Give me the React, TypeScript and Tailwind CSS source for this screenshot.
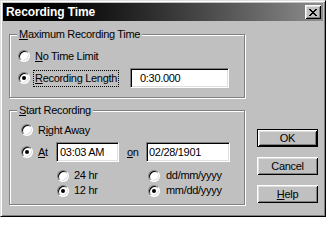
import React from 'react';

const raised =
  'shadow-[inset_1px_1px_0_#fff,inset_-1px_-1px_0_#000,inset_2px_2px_0_#dfdfdf,inset_-2px_-2px_0_#808080]';
const sunken =
  'bg-white border border-t-[#808080] border-l-[#808080] border-b-white border-r-white shadow-[inset_1px_1px_0_#000,inset_-1px_-1px_0_#dfdfdf]';

const Radio = ({ checked }: { checked?: boolean }) => (
  <span className={`relative block w-[12px] h-[12px] shrink-0 rounded-full ${sunken}`}>
    {checked && <span className="absolute left-[3px] top-[3px] w-[4px] h-[4px] rounded-full bg-black" />}
  </span>
);

const Group: React.FC<{ label: React.ReactNode; className: string; children: React.ReactNode }> = ({
  label,
  className,
  children,
}) => (
  <div className={`relative border border-[#808080] shadow-[inset_1px_1px_0_#fff,1px_1px_0_#fff] ${className}`}>
    <span className="absolute left-[7px] top-[-8px] px-[2px] bg-[#c0c0c0] leading-[14px]">{label}</span>
    {children}
  </div>
);

const Button: React.FC<{ children: React.ReactNode; isDefault?: boolean }> = ({ children, isDefault }) => (
  <button
    className={`w-[61px] h-[18px] flex items-center justify-center bg-[#c0c0c0] leading-none ${
      isDefault
        ? 'border border-black shadow-[inset_1px_1px_0_#fff,inset_-1px_-1px_0_#000,inset_2px_2px_0_#dfdfdf,inset_-2px_-2px_0_#808080]'
        : raised
    }`}
  >
    {children}
  </button>
);

export default function App() {
  return (
    <div className="w-[326px] h-[217px] p-[2px] bg-[#c0c0c0] border border-t-[#dfdfdf] border-l-[#dfdfdf] border-b-black border-r-black shadow-[inset_1px_1px_0_#fff,inset_-1px_-1px_0_#808080] font-['Liberation_Sans',Arial,sans-serif] text-[11px] tracking-[-0.3px] leading-none text-black select-none">
      {/* title bar */}
      <div className="h-[18px] flex items-center justify-between pl-[3px] pr-[2px] bg-gradient-to-r from-black to-[#8e8e8e]">
        <span className="text-white font-bold text-[12px] tracking-[-0.1px]">Recording Time</span>
        <span className={`w-[16px] h-[14px] flex items-center justify-center bg-[#c0c0c0] ${raised}`}>
          <svg width="8" height="7" viewBox="0 0 8 7" shapeRendering="crispEdges">
            <path d="M0 0h2v1h-2zM6 0h2v1h-2zM1 1h2v1h-2zM5 1h2v1h-2zM2 2h4v1h-4zM3 3h2v1h-2zM2 4h4v1h-4zM1 5h2v1h-2zM5 5h2v1h-2zM0 6h2v1h-2zM6 6h2v1h-2z" fill="#000" />
          </svg>
        </span>
      </div>

      <div className="flex pl-[6px]">
        <div className="w-[236px] flex flex-col">
          <Group
            className="mt-[13px] h-[64px] pl-[8px] pr-[15px] pt-[13px]"
            label={
              <>
                <span className="underline">M</span>aximum Recording Time
              </>
            }
          >
            <div className="h-[16px] flex items-center gap-[5px]">
              <Radio />
              <span>
                <span className="underline">N</span>o Time Limit
              </span>
            </div>
            <div className="mt-[4px] h-[20px] flex items-center">
              <Radio checked />
              <span className="ml-[3px] px-[1px] py-[1px] border border-dotted border-black leading-[13px]">
                <span className="underline">R</span>ecording Length
              </span>
              <span className={`ml-auto w-[99px] h-[20px] flex items-center pl-[9px] ${sunken}`}>0:30.000</span>
            </div>
          </Group>

          <Group
            className="mt-[12px] h-[95px] pl-[11px] pt-[11px]"
            label={
              <>
                <span className="underline">S</span>tart Recording
              </>
            }
          >
            <div className="h-[16px] flex items-center gap-[5px]">
              <Radio />
              <span>
                R<span className="underline">i</span>ght Away
              </span>
            </div>
            <div className="mt-[4px] h-[20px] flex items-center">
              <Radio checked />
              <span className="ml-[5px] w-[13px]">
                <span className="underline">A</span>t
              </span>
              <span className={`ml-[5px] w-[63px] h-[20px] flex items-center pl-[3px] ${sunken}`}>03:03 AM</span>
              <span className="ml-[8px] w-[12px]">
                <span className="underline">o</span>n
              </span>
              <span className={`ml-[7px] w-[84px] h-[20px] flex items-center pl-[2px] ${sunken}`}>02/28/1901</span>
            </div>
            <div className="mt-[6px] pl-[36px] grid grid-cols-[91px_1fr]">
              <div className="h-[15px] flex items-center gap-[5px]">
                <Radio />
                <span>24 hr</span>
              </div>
              <div className="h-[15px] flex items-center gap-[6px]">
                <Radio />
                <span>dd/mm/yyyy</span>
              </div>
              <div className="h-[15px] flex items-center gap-[5px]">
                <Radio checked />
                <span>12 hr</span>
              </div>
              <div className="h-[15px] flex items-center gap-[6px]">
                <Radio checked />
                <span>mm/dd/yyyy</span>
              </div>
            </div>
          </Group>
        </div>

        <div className="ml-[12px] mt-[108px] flex flex-col gap-[10px]">
          <Button isDefault>OK</Button>
          <Button>Cancel</Button>
          <Button>
            <span>
              <span className="underline">H</span>elp
            </span>
          </Button>
        </div>
      </div>
    </div>
  );
}
